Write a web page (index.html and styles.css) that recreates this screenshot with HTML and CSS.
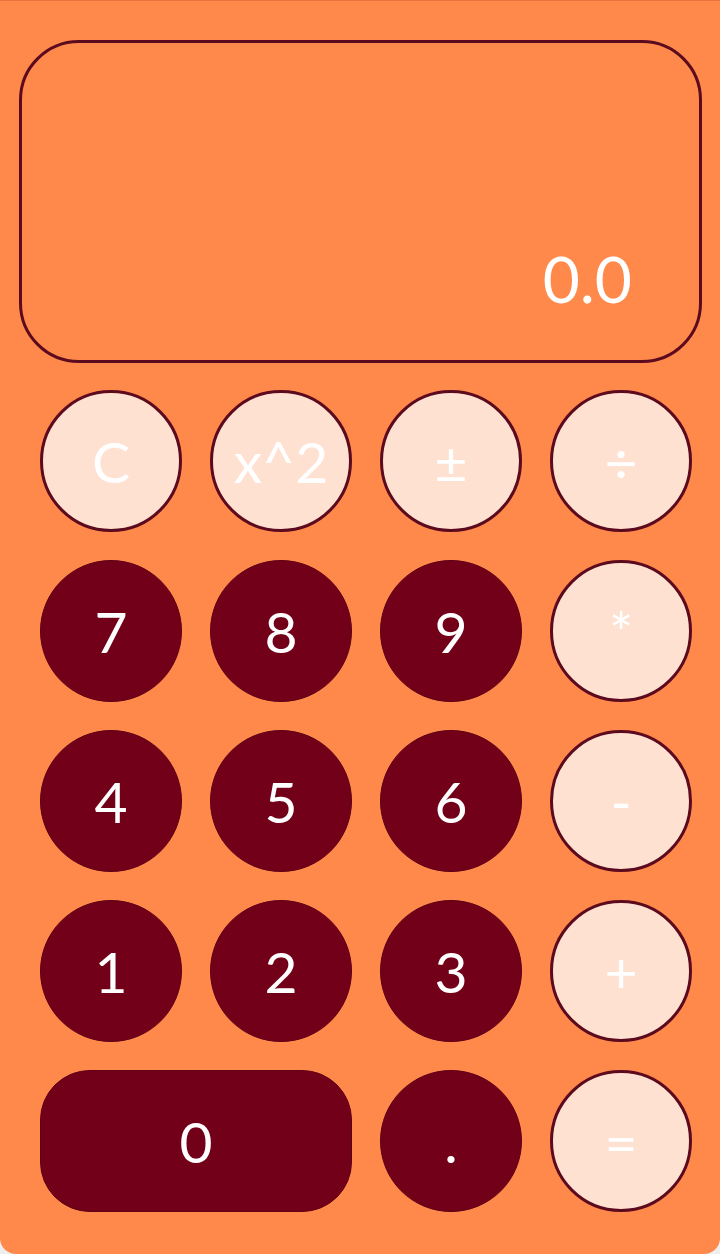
FILE: index.html
```html
<!DOCTYPE html>
<html lang="en">
<head>
<meta charset="utf-8">
<title>Calculator</title>
<link rel="stylesheet" href="styles.css">
</head>
<body>
<main class="calc">
  <section class="display"><span class="value">0.0</span></section>
  <section class="keys">
    <button class="key light">C</button>
    <button class="key light">x^2</button>
    <button class="key light">±</button>
    <button class="key light">÷</button>
    <button class="key dark">7</button>
    <button class="key dark">8</button>
    <button class="key dark">9</button>
    <button class="key light">*</button>
    <button class="key dark">4</button>
    <button class="key dark">5</button>
    <button class="key dark">6</button>
    <button class="key light">-</button>
    <button class="key dark">1</button>
    <button class="key dark">2</button>
    <button class="key dark">3</button>
    <button class="key light">+</button>
    <button class="key dark zero">0</button>
    <button class="key dark">.</button>
    <button class="key light">=</button>
  </section>
</main>
</body>
</html>
```
FILE: styles.css
```css
* { box-sizing: border-box; }
html { background: #eeeeee; }
body {
  margin: 0;
  font-family: Lato, "Liberation Sans", sans-serif;
}
.calc {
  width: 720px;
  height: 1254px;
  background: #ff884b;
  border-top: 1px solid #e8753e;
  border-radius: 0 0 16px 16px;
  padding: 39px 18px 0 19px;
}
.display {
  height: 323px;
  border: 3px solid #5c0a1e;
  border-radius: 60px;
  display: flex;
  align-items: flex-end;
  justify-content: flex-end;
  padding: 0 67px 49px 0;
}
.value {
  color: #ffffff;
  font-size: 64px;
  font-weight: 400;
  line-height: 1;
}
.keys {
  display: grid;
  grid-template-columns: repeat(4, 142px);
  grid-auto-rows: 142px;
  gap: 28px;
  padding: 27px 0 0 21px;
}
.key {
  font-family: inherit;
  font-size: 57px;
  font-weight: 400;
  color: #ffffff;
  border-radius: 50%;
  padding: 0;
  display: flex;
  align-items: center;
  justify-content: center;
  line-height: 1;
}
.light {
  background: #ffe1d2;
  border: 3px solid #5c0a1e;
}
.dark {
  background: #730019;
  border: 1px solid #5e0016;
}
.zero {
  grid-column: span 2;
  border-radius: 50px;
}
```
